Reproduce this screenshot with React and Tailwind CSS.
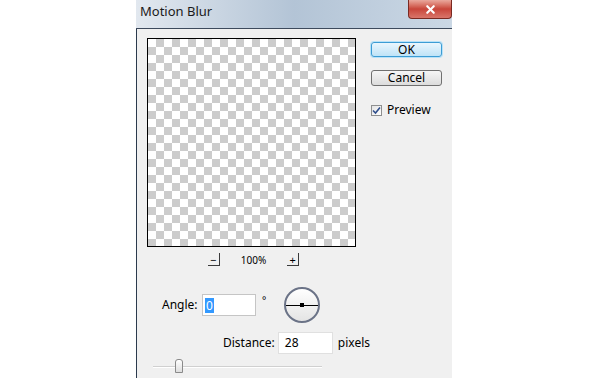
import { X } from "lucide-react";

const font = { fontFamily: '"Noto Sans", "Open Sans", sans-serif' };

function ZoomButton({ children }) {
  return (
    <div className="w-[12px] h-[13px] bg-[#f0f0f0] border-r border-b border-[#3a3a3a] flex items-center justify-center text-[11px] leading-none text-black">
      {children}
    </div>
  );
}

export default function App() {
  return (
    <div className="w-[590px] h-[378px] bg-white flex overflow-hidden" style={font}>
      <div className="ml-[136px] w-[316px] h-full flex flex-col">
        {/* Title bar */}
        <div className="h-[29px] flex items-start justify-between bg-gradient-to-r from-[#e2e8ef] via-[#b3c4d6] to-[#cbd8e5] border-b border-[#3d4a5c]">
          <span className="ml-[4px] mt-[5px] text-[13px] text-[#1a1a1a] leading-none">Motion Blur</span>
          <div className="w-[44px] h-[19px] rounded-b-[4px] border border-t-0 border-[#7a2a22] bg-gradient-to-b from-[#e9a89d] via-[#c8453a] to-[#d9756a] flex items-center justify-center">
            <X size={13} strokeWidth={4} className="text-white" />
          </div>
        </div>

        {/* Content */}
        <div className="flex-1 bg-[#f0f0f0] border-l border-[#2b3a4d] pl-[10px] pt-[9px] text-[12px] text-black">
          <div className="flex">
            <div className="flex flex-col items-center">
              <div className="w-[209px] h-[209px] border border-black bg-[conic-gradient(#cccccc_25%,#ffffff_0_50%,#cccccc_0_75%,#ffffff_0)] bg-size-[16px_16px]" />
              <div className="mt-[6px] flex items-center gap-[21px] pl-[4px]">
                <ZoomButton>−</ZoomButton>
                <span className="text-[10px] leading-none">100%</span>
                <ZoomButton>+</ZoomButton>
              </div>
            </div>

            <div className="ml-[15px] mt-[4px] flex flex-col">
              <div className="w-[71px] h-[15px] rounded-[3px] border border-[#3c9cd4] bg-gradient-to-b from-[#eaf6fd] to-[#bfe3f7] flex items-center justify-center text-[12px] leading-none shadow-[0_0_0_1px_#b8e2f8]">
                OK
              </div>
              <div className="mt-[13px] w-[71px] h-[16px] rounded-[3px] border border-[#707070] bg-gradient-to-b from-[#f6f6f6] to-[#dcdcdc] flex items-center justify-center text-[12px] leading-none">
                Cancel
              </div>
              <div className="mt-[18px] flex items-center gap-[5px]">
                <div className="w-[11px] h-[11px] border border-[#8e8f8f] bg-gradient-to-br from-[#e4e4e4] to-white flex items-center justify-center">
                  <svg width="9" height="9" viewBox="0 0 9 9">
                    <path d="M1 4.5 L3.5 7 L8 1.5" fill="none" stroke="#2f4e8c" strokeWidth="1.6" />
                  </svg>
                </div>
                <span className="text-[12px] leading-none">Preview</span>
              </div>
            </div>
          </div>

          {/* Angle */}
          <div className="mt-[21px] flex items-center">
            <span className="ml-[15px] w-[40px] text-[12px]">Angle:</span>
            <div className="w-[54px] h-[22px] bg-white border border-[#c5c5c5] flex items-center pl-[2px]">
              <span className="bg-[#3399ff] text-white px-[1px] leading-[15px]">0</span>
            </div>
            <span className="ml-[6px] -mt-[10px] text-[10px]">°</span>
            <div className="ml-[18px] relative w-[36px] h-[36px] rounded-full border-2 border-[#6b7387] bg-gradient-to-b from-[#ffffff] to-[#e4e4e4] flex items-center justify-center">
              <div className="absolute left-0 right-0 top-1/2 h-px bg-black" />
              <div className="relative w-[4px] h-[4px] bg-black" />
            </div>
          </div>

          {/* Distance */}
          <div className="mt-[9px] flex items-center">
            <span className="ml-[76px] text-[12px]">Distance:</span>
            <div className="ml-[3px] w-[55px] h-[22px] bg-white border border-[#e0e0e0] flex items-center pl-[6px] text-[12px]">
              28
            </div>
            <span className="ml-[5px] text-[12px]">pixels</span>
          </div>

          {/* Slider */}
          <div className="mt-[5px] ml-[6px] relative w-[169px] h-[15px] flex items-center">
            <div className="w-full h-[2px] bg-[#d0d0d0] border-b border-white" />
            <div className="absolute left-[22px] top-0 w-[8px] h-[14px] rounded-t-[3px] border border-[#8a8a8a] bg-gradient-to-b from-white to-[#dedede]" />
          </div>
        </div>
      </div>
    </div>
  );
}
